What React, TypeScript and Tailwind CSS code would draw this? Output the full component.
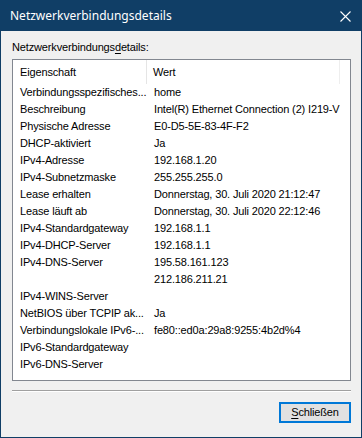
const rows: [string, string][] = [
  ['Verbindungsspezifisches...', 'home'],
  ['Beschreibung', 'Intel(R) Ethernet Connection (2) I219-V'],
  ['Physische Adresse', 'E0-D5-5E-83-4F-F2'],
  ['DHCP-aktiviert', 'Ja'],
  ['IPv4-Adresse', '192.168.1.20'],
  ['IPv4-Subnetzmaske', '255.255.255.0'],
  ['Lease erhalten', 'Donnerstag, 30. Juli 2020 21:12:47'],
  ['Lease läuft ab', 'Donnerstag, 30. Juli 2020 22:12:46'],
  ['IPv4-Standardgateway', '192.168.1.1'],
  ['IPv4-DHCP-Server', '192.168.1.1'],
  ['IPv4-DNS-Server', '195.58.161.123'],
  ['', '212.186.211.21'],
  ['IPv4-WINS-Server', ''],
  ['NetBIOS über TCPIP ak...', 'Ja'],
  ['Verbindungslokale IPv6-...', 'fe80::ed0a:29a8:9255:4b2d%4'],
  ['IPv6-Standardgateway', ''],
  ['IPv6-DNS-Server', ''],
];

export default function App() {
  return (
    <div className="w-[362px] h-[438px] bg-[#103e66] p-px flex flex-col font-['Liberation_Sans',Arial,sans-serif] text-[11px] tracking-[-0.15px] text-black">
      {/* title bar */}
      <div className="h-[30px] flex items-center justify-between pl-[9px] pr-[9px] text-white">
        <span className="font-['Segoe_UI','Noto_Sans',sans-serif] text-[12px] tracking-normal">Netzwerkverbindungsdetails</span>
        <svg width="11" height="11" viewBox="0 0 11 11" className="mr-px">
          <path d="M0.5 0.5 L10.5 10.5 M10.5 0.5 L0.5 10.5" stroke="white" strokeWidth="1.1" />
        </svg>
      </div>

      <div className="flex-1 bg-[#f0f0f0] flex flex-col pl-[11px] pr-[10px] pt-[10px]">
        <div className="h-[13px] leading-[13px]">
          Netzwerkverbindungs<span className="underline underline-offset-2">d</span>etails:
        </div>

        <div className="mt-[5px] h-[322px] border border-[#828790] bg-white flex flex-col">
          <div className="h-[24px] flex items-center">
            <div className="w-[134px] h-full flex items-center pl-[7px] border-r border-[#e5e5e5]">Eigenschaft</div>
            <div className="w-[193px] h-full flex items-center pl-[6px] border-r border-[#eeeeee]">Wert</div>
          </div>
          {rows.map(([k, v], i) => (
            <div key={i} className="h-[17px] flex items-center whitespace-nowrap">
              <div className="w-[134px] pl-[7px]">{k}</div>
              <div className="pl-[7px]">{v}</div>
            </div>
          ))}
        </div>

        <div className="mt-[9px] h-[2px] border-t border-[#a0a0a0] border-b border-b-white" />

        <div className="mt-[10px] flex justify-end">
          <button className="w-[72px] h-[21px] bg-[#e1e1e1] border-2 border-[#0078d7] flex items-center justify-center">
            <span>
              <span className="underline underline-offset-2">S</span>chließen
            </span>
          </button>
        </div>
      </div>
    </div>
  );
}
